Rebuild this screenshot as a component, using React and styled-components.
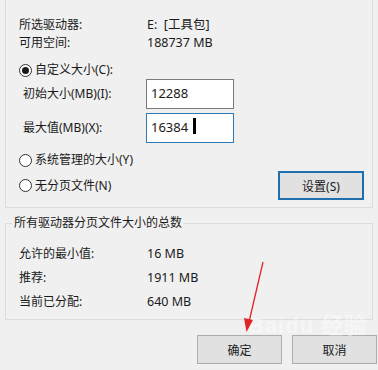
import React from 'react'
import styled, { createGlobalStyle } from 'styled-components'

const GlobalStyle = createGlobalStyle`
  html, body {
    margin: 0;
    padding: 0;
    background: #f0f0f0;
  }
  body {
    font-family: "Noto Sans", "Noto Sans CJK SC", sans-serif;
    font-size: 12px;
    color: #1a1a1a;
  }
`

const Page = styled.div`
  position: relative;
  width: 378px;
  height: 370px;
  overflow: hidden;
  box-sizing: border-box;
  padding: 0 5px;
  display: flex;
  flex-direction: column;
`

const GroupBox = styled.div`
  box-sizing: border-box;
  border: 1px solid #dcdcdc;
  border-top: ${(p) => (p.$open ? 'none' : '1px solid #dcdcdc')};
  height: ${(p) => p.$height};
  margin-top: ${(p) => p.$top || '0'};
  position: relative;
  padding: ${(p) => p.$padding};
  display: flex;
  flex-direction: column;
`

const Legend = styled.div`
  position: absolute;
  top: -9px;
  left: 6px;
  padding: 0 2px;
  background: #f0f0f0;
  line-height: 16px;
`

const Row = styled.div`
  display: flex;
  align-items: center;
  height: ${(p) => p.$h || '16px'};
  margin-top: ${(p) => p.$mt || '0'};
  line-height: 16px;
  white-space: nowrap;
`

const Label = styled.span`
  width: ${(p) => p.$w || '128px'};
  padding-left: ${(p) => p.$indent || '0'};
  box-sizing: border-box;
  flex-shrink: 0;
`

const Value = styled.span`
  font-size: 12.5px;
`

const Radio = styled.span`
  width: 11px;
  height: 11px;
  border: 1px solid #333;
  border-radius: 50%;
  box-sizing: content-box;
  margin-right: 3px;
  display: inline-flex;
  align-items: center;
  justify-content: center;
  background: #fff;

  &::after {
    content: '';
    width: 7px;
    height: 7px;
    border-radius: 50%;
    background: ${(p) => (p.$checked ? '#1a1a1a' : 'transparent')};
  }
`

const TextBox = styled.div`
  box-sizing: border-box;
  width: 88px;
  height: 30px;
  background: #fff;
  border: 1px solid ${(p) => (p.$focused ? '#2a7ab8' : '#7a7a7a')};
  padding: 5px 0 0 4px;
  margin-left: -1px;
  display: flex;
  align-items: flex-start;
  font-size: 13px;
  line-height: 16px;
`

const Caret = styled.span`
  width: 3px;
  height: 16px;
  background: #000;
  margin: -1px 0 0 5px;
`

const Spacer = styled.div`
  flex: 1;
`

const Button = styled.button`
  box-sizing: border-box;
  width: ${(p) => p.$w || '85px'};
  height: ${(p) => p.$h || '29px'};
  background: #e1e1e1;
  border: ${(p) => (p.$default ? '2px solid #1f6fae' : '1px solid #adadad')};
  font-family: inherit;
  font-size: 12px;
  color: #1a1a1a;
  padding: 0;
`

const Footer = styled.div`
  display: flex;
  justify-content: flex-end;
  gap: 10px;
  margin-top: 15px;
  margin-right: -4px;
`

const Arrow = styled.svg`
  position: absolute;
  left: 0;
  top: 0;
  pointer-events: none;
`

const Watermark = styled.div`
  position: absolute;
  left: 248px;
  top: 314px;
  font-family: "Liberation Sans", "Noto Sans CJK SC", sans-serif;
  font-size: 22px;
  line-height: 24px;
  font-weight: bold;
  color: rgba(255, 255, 255, 0.45);
  letter-spacing: 1px;
  pointer-events: none;
`

const App = () => {
  return (
    <>
      <GlobalStyle />
      <Page>
        <GroupBox $open $height='208px' $padding='17px 0 0 13px'>
          <Row>
            <Label>所选驱动器:</Label>
            <Value>E:&nbsp;&nbsp;[工具包]</Value>
          </Row>
          <Row $mt='2px'>
            <Label>可用空间:</Label>
            <Value>188737 MB</Value>
          </Row>
          <Row $mt='11px'>
            <Radio $checked />
            自定义大小(C):
          </Row>
          <Row $h='30px' $mt='1px'>
            <Label $indent='4px'>初始大小(MB)(I):</Label>
            <TextBox>12288</TextBox>
          </Row>
          <Row $h='30px' $mt='4px'>
            <Label $indent='4px'>最大值(MB)(X):</Label>
            <TextBox $focused>
              16384
              <Caret />
            </TextBox>
          </Row>
          <Row $mt='9px'>
            <Radio />
            系统管理的大小(Y)
          </Row>
          <Row $h='29px' $mt='3px'>
            <Radio />
            无分页文件(N)
            <Spacer />
            <Button $default $w='86px' style={{ marginRight: '8px' }}>设置(S)</Button>
          </Row>
        </GroupBox>

        <GroupBox $top='15px' $height='97px' $padding='22px 0 0 13px'>
          <Legend>所有驱动器分页文件大小的总数</Legend>
          <Row>
            <Label>允许的最小值:</Label>
            <Value>16 MB</Value>
          </Row>
          <Row $mt='8px'>
            <Label>推荐:</Label>
            <Value>1911 MB</Value>
          </Row>
          <Row $mt='8px'>
            <Label>当前已分配:</Label>
            <Value>640 MB</Value>
          </Row>
        </GroupBox>

        <Footer>
          <Button>确定</Button>
          <Button>取消</Button>
        </Footer>

        <Watermark>Baidu 经验</Watermark>

        <Arrow width='378' height='370' viewBox='0 0 378 370'>
          <line x1='263' y1='262' x2='249' y2='322' stroke='#e02424' strokeWidth='1.3' />
          <polygon points='246.5,332 244,318 253,320' fill='#e02424' />
        </Arrow>
      </Page>
    </>
  )
}

export default App
